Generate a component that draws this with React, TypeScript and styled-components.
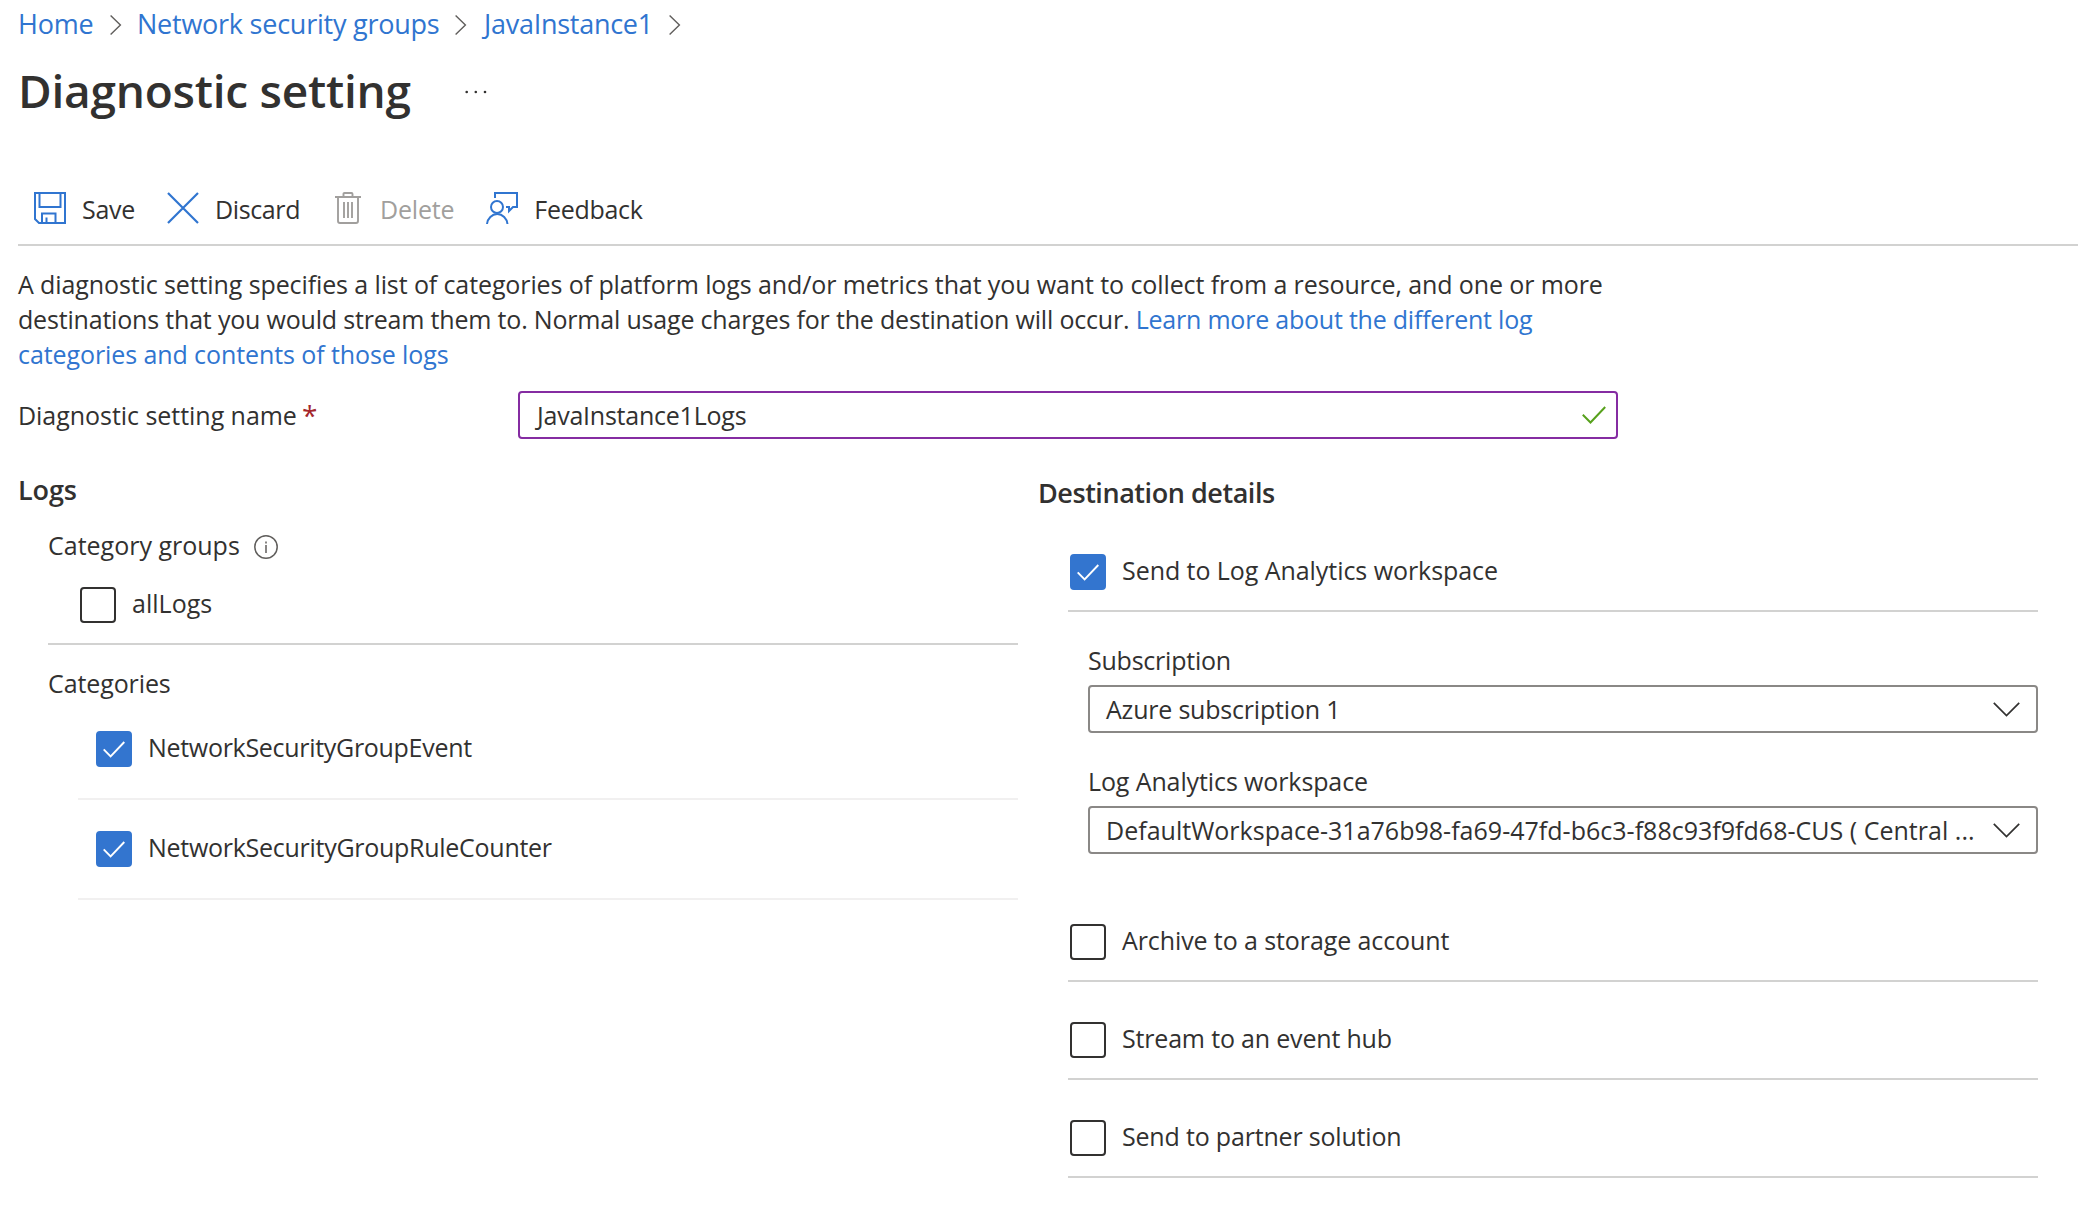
import React from "react";
import styled, { createGlobalStyle } from "styled-components";

const color = {
  text: "#323130",
  link: "#3075d0",
  accent: "#3375cf",
  line: "#d2d2d1",
  faint: "#f1f0f0",
  disabled: "#a19f9d",
  control: "#8a8886",
  purple: "#852ca2",
  green: "#57a11c",
  danger: "#a4262c",
};

const GlobalStyle = createGlobalStyle`
  *, *::before, *::after { box-sizing: border-box; }
  body {
    margin: 0;
    background: #fff;
    color: ${color.text};
    font-family: "Open Sans", "Noto Sans", sans-serif;
    font-size: 25px;
    line-height: 34px;
  }
  svg { display: block; flex: none; }
`;

const Page = styled.main`
  width: 2078px;
  height: 1208px;
  overflow: hidden;
  padding-left: 18px;
`;

const Label = styled.span<{ $track?: number }>`
  white-space: nowrap;
  letter-spacing: ${(p) => p.$track ?? 0}px;
`;

const Breadcrumb = styled.nav`
  display: grid;
  grid-template-columns: 92px 27px 318px 29px 185px 12px;
  align-items: center;
  height: 48px;
  font-size: 27px;
  svg { margin-top: 2px; }
`;

const Crumb = styled.a<{ $track: number }>`
  color: ${color.link};
  white-space: nowrap;
  letter-spacing: ${(p) => p.$track}px;
`;

const TitleRow = styled.header`
  display: flex;
  align-items: center;
  height: 84px;
  svg { margin-top: 4px; }
`;

const Title = styled.h1`
  width: 447px;
  margin: 0;
  font-size: 46px;
  font-weight: 600;
  line-height: 62px;
  letter-spacing: -0.24px;
`;

const Toolbar = styled.div`
  display: flex;
  align-items: center;
  gap: 32px;
  height: 74px;
  margin-top: 40px;
  padding-left: 16px;
  border-bottom: 2px solid ${color.line};
`;

const Command = styled.button<{ $disabled?: boolean }>`
  display: flex;
  align-items: center;
  gap: 16px;
  padding: 0;
  border: 0;
  background: none;
  font: inherit;
  color: ${(p) => (p.$disabled ? color.disabled : color.text)};
  ${Label} { padding-top: 2px; }
  svg { color: ${(p) => (p.$disabled ? color.disabled : color.link)}; }
`;

const Intro = styled.p`
  margin: 21px 0 0;
  line-height: 35px;
  a { color: ${color.link}; }
`;

const NameRow = styled.div`
  display: flex;
  align-items: center;
  margin-top: 19px;
`;

const NameLabel = styled.label`
  display: flex;
  gap: 5px;
  width: 500px;
`;

const Required = styled.span`
  color: ${color.danger};
  font-size: 28px;
`;

const NameInput = styled.div`
  display: flex;
  align-items: center;
  justify-content: space-between;
  width: 1100px;
  height: 48px;
  padding: 0 10px 0 17px;
  border: 2px solid ${color.purple};
  border-radius: 4px;
`;

const Columns = styled.div`
  display: grid;
  grid-template-columns: 1000px 1000px;
  column-gap: 20px;
`;

const Column = styled.section<{ $top: number }>`
  display: flex;
  flex-direction: column;
  padding-top: ${(p) => p.$top}px;
`;

const Heading = styled.h2<{ $track: number }>`
  margin: 0;
  font-size: 27px;
  font-weight: 600;
  line-height: 40px;
  letter-spacing: ${(p) => p.$track}px;
`;

const Indented = styled.div<{ $top: number }>`
  display: flex;
  flex-direction: column;
  margin-top: ${(p) => p.$top}px;
  padding-left: 30px;
`;

const GroupTitle = styled.div`
  display: flex;
  align-items: center;
  gap: 14px;
  height: 44px;
  svg { margin-top: 4px; }
`;

const CategoriesTitle = styled.div`
  height: 55px;
  padding-top: 21px;
`;

const Option = styled.label<{ $inset: number; $top?: number }>`
  display: flex;
  align-items: center;
  gap: 16px;
  height: 78px;
  margin-top: ${(p) => p.$top ?? 0}px;
  padding-left: ${(p) => p.$inset}px;
  border-bottom: 2px solid ${color.line};
  ${Label} { padding-bottom: 4px; }
`;

const CategoryOption = styled(Option)`
  height: 100px;
  margin-left: 30px;
  border-bottom-color: ${color.faint};
`;

const Box = styled.span<{ $checked?: boolean }>`
  display: grid;
  place-items: center;
  flex: none;
  width: 36px;
  height: 36px;
  border: 2px solid ${(p) => (p.$checked ? color.accent : color.text)};
  border-radius: 4px;
  background: ${(p) => (p.$checked ? color.accent : "#fff")};
`;

const Field = styled.div`
  display: flex;
  flex-direction: column;
  gap: 8px;
  margin-top: 31px;
  padding-left: 20px;
`;

const Select = styled.div`
  display: flex;
  align-items: center;
  justify-content: space-between;
  height: 48px;
  padding: 0 16px;
  border: 2px solid ${color.control};
  border-radius: 4px;
`;

const CrumbChevron = () => (
  <svg width="12" height="20" viewBox="0 0 12 20" fill="none" stroke="#605e5c" strokeWidth="1.4">
    <path d="M.6.6 10.4 10 .6 19.4" />
  </svg>
);

const DownChevron = () => (
  <svg width="27" height="15" viewBox="0 0 27 15" fill="none" stroke={color.text} strokeWidth="1.7">
    <path d="M.8.8 13.5 13.5 26.2.8" />
  </svg>
);

const SaveIcon = () => (
  <svg width="32" height="32" viewBox="0 0 32 32" fill="none" stroke="currentColor" strokeWidth="2">
    <path d="M1 1h30v30H5l-4-4z" />
    <path d="M5.5 1v14h21V1" />
    <path d="M8 31V21.5h13.500V31M12.500 31v-5.500" />
  </svg>
);

const DiscardIcon = () => (
  <svg width="32" height="32" viewBox="0 0 32 32" fill="none" stroke="currentColor" strokeWidth="2.2">
    <path d="M1 1l30 30M31 1 1 31" />
  </svg>
);

const DeleteIcon = () => (
  <svg width="32" height="32" viewBox="0 0 32 32" fill="none" stroke="currentColor" strokeWidth="1.9">
    <path d="M3 5h26M11.500 5V2q0-1 1-1h7q1 0 1 1v3" />
    <path d="M6 5v24q0 2 2 2h16q2 0 2-2V5" />
    <path d="M12 10v16M16 10v16M20 10v16" />
  </svg>
);

const FeedbackIcon = () => (
  <svg width="32" height="32" viewBox="0 0 32 32" fill="none" stroke="currentColor" strokeWidth="2">
    <path d="M9 6V1h22v14h-4l-4 4v-4h-3" />
    <circle cx="11" cy="15" r="6" />
    <path d="M1 32a10.300 11 0 0 1 20.500 0" />
  </svg>
);

const InfoIcon = () => (
  <svg width="24" height="24" viewBox="0 0 24 24" fill="none" stroke="#605e5c" strokeWidth="1.5">
    <circle cx="12" cy="12" r="11.200" />
    <path d="M12 10v8M12 6.500v2" />
  </svg>
);

const MoreIcon = () => (
  <svg width="22" height="4" viewBox="0 0 22 4" fill={color.text}>
    <circle cx="1.700" cy="2" r="1.300" />
    <circle cx="10.800" cy="2" r="1.300" />
    <circle cx="20" cy="2" r="1.300" />
  </svg>
);

const ValidIcon = () => (
  <svg width="24" height="18" viewBox="0 0 24 18" fill="none" stroke={color.green} strokeWidth="2">
    <path d="M.8 8.800 8.500 16.500 23.200 1" />
  </svg>
);

const Checkbox = ({ checked }: { checked?: boolean }) => (
  <Box $checked={checked}>
    {checked && (
      <svg width="22" height="17" viewBox="0 0 22 17" fill="none" stroke="#fff" strokeWidth="1.900">
        <path d="M.7 8.300 7.600 15.300 21.300 1" />
      </svg>
    )}
  </Box>
);

export default function App() {
  return (
    <Page>
      <GlobalStyle />
      <Breadcrumb>
        <Crumb $track={-0.2}>Home</Crumb>
        <CrumbChevron />
        <Crumb $track={-0.24}>Network security groups</Crumb>
        <CrumbChevron />
        <Crumb $track={-0.27}>JavaInstance1</Crumb>
        <CrumbChevron />
      </Breadcrumb>
      <TitleRow>
        <Title>Diagnostic setting</Title>
        <MoreIcon />
      </TitleRow>
      <Toolbar>
        <Command><SaveIcon /><Label $track={-0.26}>Save</Label></Command>
        <Command><DiscardIcon /><Label $track={-0.4}>Discard</Label></Command>
        <Command $disabled><DeleteIcon /><Label $track={-0.2}>Delete</Label></Command>
        <Command><FeedbackIcon /><Label $track={-0.3}>Feedback</Label></Command>
      </Toolbar>
      <Intro>
        <Label $track={-0.105}>
          A diagnostic setting specifies a list of categories of platform logs and/or metrics that you want to collect from a resource, and one or more
        </Label>
        <br />
        <Label $track={-0.186}>
          destinations that you would stream them to. Normal usage charges for the destination will occur.{" "}
        </Label>
        <a>
          <Label $track={-0.22}>Learn more about the different log</Label>
          <br />
          <Label $track={-0.09}>categories and contents of those logs</Label>
        </a>
      </Intro>
      <NameRow>
        <NameLabel>
          <Label $track={-0.04}>Diagnostic setting name</Label>
          <Required>*</Required>
        </NameLabel>
        <NameInput>
          <Label $track={-0.23}>JavaInstance1Logs</Label>
          <ValidIcon />
        </NameInput>
      </NameRow>
      <Columns>
        <Column $top={31}>
          <Heading $track={-0.1}>Logs</Heading>
          <Indented $top={13}>
            <GroupTitle>
              <Label>Category groups</Label>
              <InfoIcon />
            </GroupTitle>
            <Option $inset={32}><Checkbox /><Label $track={0.03}>allLogs</Label></Option>
            <CategoriesTitle><Label $track={-0.1}>Categories</Label></CategoriesTitle>
            <CategoryOption $inset={18}>
              <Checkbox checked /><Label $track={-0.3}>NetworkSecurityGroupEvent</Label>
            </CategoryOption>
            <CategoryOption $inset={18}>
              <Checkbox checked /><Label $track={-0.275}>NetworkSecurityGroupRuleCounter</Label>
            </CategoryOption>
          </Indented>
        </Column>
        <Column $top={34}>
          <Heading $track={-0.45}>Destination details</Heading>
          <Indented $top={21}>
            <Option $inset={2}><Checkbox checked /><Label $track={-0.059}>Send to Log Analytics workspace</Label></Option>
            <Field>
              <Label $track={-0.23}>Subscription</Label>
              <Select><Label $track={-0.2}>Azure subscription 1</Label><DownChevron /></Select>
            </Field>
            <Field>
              <Label $track={-0.112}>Log Analytics workspace</Label>
              <Select>
                <Label $track={0.02}>DefaultWorkspace-31a76b98-fa69-47fd-b6c3-f88c93f9fd68-CUS ( Central ...</Label>
                <DownChevron />
              </Select>
            </Field>
            <Option $inset={2} $top={50}><Checkbox /><Label $track={-0.1}>Archive to a storage account</Label></Option>
            <Option $inset={2} $top={20}><Checkbox /><Label $track={-0.18}>Stream to an event hub</Label></Option>
            <Option $inset={2} $top={20}><Checkbox /><Label $track={-0.186}>Send to partner solution</Label></Option>
          </Indented>
        </Column>
      </Columns>
    </Page>
  );
}
